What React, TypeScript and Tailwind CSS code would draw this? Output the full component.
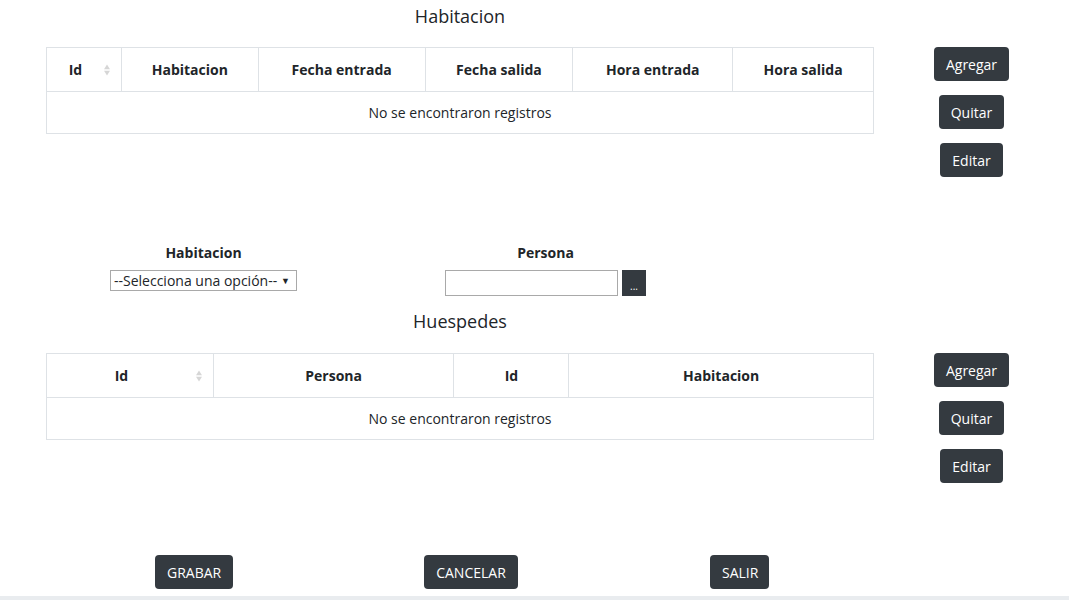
import React from 'react';

const SortIcon = () => (
  <svg width="8" height="14" viewBox="0 0 8 14" className="shrink-0">
    <path d="M4 1.5 L7 6.2 L1 6.2 Z" fill="#d6d6d6" />
    <path d="M4 12.5 L7 7.8 L1 7.8 Z" fill="#d6d6d6" />
  </svg>
);

const DarkButton = ({ label, className = '' }: { label: string; className?: string }) => (
  <button className={`h-[34px] px-3 bg-[#343a40] text-white text-[14px] rounded-[4px] ${className}`}>
    {label}
  </button>
);

const SideButtons = () => (
  <div className="w-[198px] flex flex-col items-center gap-[14px]">
    <DarkButton label="Agregar" />
    <DarkButton label="Quitar" />
    <DarkButton label="Editar" />
  </div>
);

type Col = { label: string; width: string; sort?: boolean };

const DataTable = ({ cols }: { cols: Col[] }) => (
  <table className="w-[828px] border-collapse border border-[#dee2e6] text-[14px] text-[#212529]">
    <thead>
      <tr className="h-[44px]">
        {cols.map((c, i) => (
          <th key={i} className={`${c.width} border border-[#dee2e6] font-bold text-center ${c.sort ? 'p-0' : 'px-2'}`}>
            {c.sort ? (
              <div className="flex items-center pr-[10px]">
                <span className="flex-1 text-center pl-[1px]">{c.label}</span>
                <SortIcon />
              </div>
            ) : (
              c.label
            )}
          </th>
        ))}
      </tr>
    </thead>
    <tbody>
      <tr className="h-[42px]">
        <td colSpan={cols.length} className="text-center border border-[#dee2e6]">
          No se encontraron registros
        </td>
      </tr>
    </tbody>
  </table>
);

export default function App() {
  return (
    <div className="w-[1069px] h-[600px] bg-white overflow-hidden flex flex-col font-['Open_Sans',sans-serif] text-[#212529]">
      <h2 className="w-[828px] ml-[46px] text-center text-[18px] leading-[24px] mt-[4px] text-[#212529]">Habitacion</h2>
      <div className="flex items-start mt-[19px]">
        <div className="ml-[46px]">
          <DataTable
            cols={[
              { label: 'Id', width: 'w-[75px]', sort: true },
              { label: 'Habitacion', width: 'w-[137px]' },
              { label: 'Fecha entrada', width: 'w-[167px]' },
              { label: 'Fecha salida', width: 'w-[148px]' },
              { label: 'Hora entrada', width: 'w-[160px]' },
              { label: 'Hora salida', width: 'w-[141px]' },
            ]}
          />
        </div>
        <SideButtons />
      </div>

      <div className="flex mt-[67px] text-[14px]">
        <div className="w-[187px] ml-[110px] flex flex-col items-center">
          <label className="font-bold leading-[18px]">Habitacion</label>
          <div className="mt-[8px] w-[187px] h-[21px] border border-[#a9a9a9] flex items-center justify-between pl-[3px] pr-[6px] text-[14px]">
            <span className="whitespace-nowrap">--Selecciona una opción--</span>
            <span className="text-[9px]">▼</span>
          </div>
        </div>
        <div className="ml-[148px] flex flex-col items-center w-[201px]">
          <label className="font-bold leading-[18px]">Persona</label>
          <div className="mt-[8px] flex items-start gap-[4px]">
            <div className="w-[173px] h-[26px] border border-[#a9a9a9]" />
            <button className="w-[24px] h-[26px] bg-[#343a40] text-white text-[10px] leading-none pt-[6px]">...</button>
          </div>
        </div>
      </div>

      <h2 className="w-[828px] ml-[46px] text-center text-[18px] leading-[24px] mt-[13px]">Huespedes</h2>
      <div className="flex items-start mt-[20px]">
        <div className="ml-[46px]">
          <DataTable
            cols={[
              { label: 'Id', width: 'w-[167px]', sort: true },
              { label: 'Persona', width: 'w-[241px]' },
              { label: 'Id', width: 'w-[115px]' },
              { label: 'Habitacion', width: 'w-[305px]' },
            ]}
          />
        </div>
        <SideButtons />
      </div>

      <div className="flex items-start mt-[72px]">
        <DarkButton label="GRABAR" className="ml-[155px] w-[78px]" />
        <DarkButton label="CANCELAR" className="ml-[191px] w-[94px]" />
        <DarkButton label="SALIR" className="ml-[192px] w-[59px]" />
      </div>
      <div className="mt-auto h-[4px] bg-[#e9ecef]" />
    </div>
  );
}
